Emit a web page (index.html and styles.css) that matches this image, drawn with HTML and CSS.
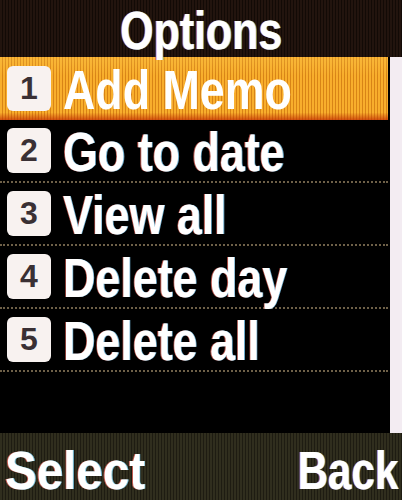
FILE: index.html
```html
<!DOCTYPE html>
<html lang="en">
<head>
    <meta charset="UTF-8" />
    <meta name="viewport" content="width=device-width, initial-scale=1.0"/>
    <title>Options</title>
    <link rel="stylesheet" href="styles.css">
</head>
<body>
    <div class="screen">
        <div class="title-bar"><span class="squeeze">Options</span></div>

        <div class="menu-area">
            <ul class="menu">
                <li class="menu-item selected"><span class="num">1</span><span class="label">Add Memo</span></li>
                <li class="menu-item"><span class="num">2</span><span class="label">Go to date</span></li>
                <li class="menu-item"><span class="num">3</span><span class="label">View all</span></li>
                <li class="menu-item"><span class="num">4</span><span class="label">Delete day</span></li>
                <li class="menu-item"><span class="num">5</span><span class="label">Delete all</span></li>
            </ul>
            <div class="scrollbar"></div>
        </div>

        <div class="softkeys">
            <span class="key key-left">Select</span>
            <span class="key key-right">Back</span>
        </div>
    </div>
</body>
</html>
```

FILE: styles.css
```css
/* General Reset */
* {
    box-sizing: border-box;
    margin: 0;
    padding: 0;
}

body {
    background-color: #000;
    font-family: 'Liberation Sans', Arial, sans-serif;
    font-weight: bold;
    color: #fff;
}

.screen {
    width: 402px;
    height: 500px;
    display: flex;
    flex-direction: column;
    overflow: hidden;
}

/* Title bar */
.title-bar {
    height: 57px;
    display: flex;
    justify-content: center;
    align-items: center;
    font-size: 53px;
    line-height: 1;
    padding-top: 3px;
    background: repeating-linear-gradient(90deg, #22140e 0 2px, #120a06 2px 3px);
    text-shadow: 1px 0 0 #7ac0d8, -1px 0 0 #c05a50;
}

/* narrow pixel-font look */
.squeeze {
    display: inline-block;
    transform: scaleX(0.81);
}

/* Menu list + scrollbar */
.menu-area {
    height: 376px;
    display: flex;
}

.menu {
    list-style: none;
    flex: 1;
    margin-right: 2px;
}

.menu-item {
    height: 63px;
    display: flex;
    align-items: center;
    gap: 12px;
    padding-left: 7px;
    border-bottom: 2px dotted #6e6048;
    text-shadow: 1px 0 0 #6aa8c8, -1px 0 0 #b05048;
}

.menu-item.selected {
    border-bottom: none;
    background:
        linear-gradient(180deg, rgba(255, 210, 90, 0.25) 0%, rgba(0, 0, 0, 0) 30%, rgba(0, 0, 0, 0) 88%, rgba(190, 40, 0, 0.7) 100%),
        repeating-linear-gradient(90deg, #f8ae2c 0 2px, #d88416 2px 3px);
    text-shadow: none;
}

.num {
    width: 44px;
    height: 45px;
    flex-shrink: 0;
    display: flex;
    justify-content: center;
    align-items: center;
    background-color: #f8f2f0;
    border-radius: 6px;
    color: #3a3034;
    font-size: 32px;
    text-shadow: none;
}

.label {
    display: inline-block;
    font-size: 56px;
    line-height: 1;
    padding-top: 3px;
    white-space: nowrap;
    transform: scaleX(0.8);
    transform-origin: left center;
}

.scrollbar {
    width: 12px;
    background-color: #f3ecf2;
}

/* Soft keys */
.softkeys {
    flex: 1;
    display: flex;
    justify-content: space-between;
    align-items: center;
    padding: 6px 4px 0 5px;
    font-size: 54px;
    line-height: 1;
    background: repeating-linear-gradient(90deg, #302e1e 0 2px, #1e1c12 2px 3px);
    text-shadow: 1px 0 0 #7ac0d8, -1px 0 0 #c05a50;
}

.key {
    display: inline-block;
}

.key-left {
    transform: scaleX(0.88);
    transform-origin: left center;
}

.key-right {
    transform: scaleX(0.78);
    transform-origin: right center;
}
```
